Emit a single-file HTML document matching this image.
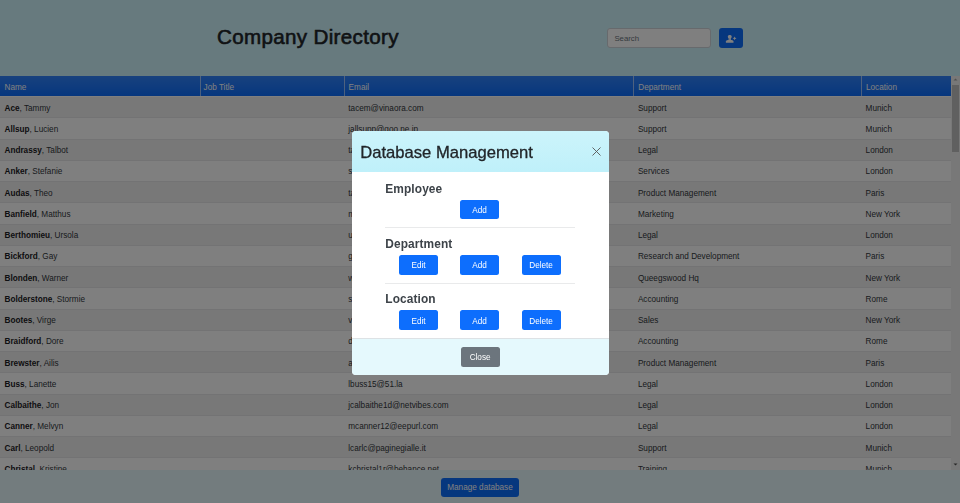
<!DOCTYPE html>
<html><head><meta charset="utf-8">
<style>
*{box-sizing:border-box;margin:0;padding:0}
html,body{width:960px;height:503px;overflow:hidden}
body{font-family:"Liberation Sans",sans-serif;background:#cff4fc;position:relative;color:#212529}
.title{position:absolute;left:217px;top:24px;font-size:20.6px;line-height:26px;color:#212529;white-space:nowrap;letter-spacing:0.33px;-webkit-text-stroke:0.6px #212529}
.search{position:absolute;left:607px;top:28px;width:103.5px;height:19.5px;background:#fff;border:1px solid #ced4da;border-radius:3px}
.search span{position:absolute;left:6.4px;top:0.7px;line-height:17px;font-size:7.8px;color:#6c757d}
.addbtn{position:absolute;left:719px;top:28px;width:24px;height:19.5px;background:#0d6efd;border-radius:3px}
.addbtn svg{position:absolute;left:0;top:0}
.tbl{position:absolute;left:0;top:76px;width:960px;height:394px;overflow:hidden;background:#fff}
.thead{position:absolute;left:0;top:0;width:951px;height:20.3px;background:#0d6efd linear-gradient(180deg,rgba(255,255,255,.15),rgba(255,255,255,0));color:#fff;font-size:8.2px;line-height:20.8px}
.thead .h{position:absolute;top:1.8px;height:20.8px;white-space:nowrap}
.vs{position:absolute;top:0;width:1px;height:20.8px;background:rgba(255,255,255,.55)}
.r{position:absolute;left:0;width:951px;height:21.2px;background:#fff;border-bottom:1px solid #e6e7e8;font-size:8.2px;line-height:21.2px;white-space:nowrap;color:#32373c}
.r b{color:#1c2024}
.r.odd{background:#f0f0f0}
.c{position:absolute;top:0.6px}
.c1{left:4.5px}.c3{left:348.3px}.c4{left:637.9px}.c5{left:865.6px}
.sb{position:absolute;left:951px;top:0;width:9px;height:394px;background:#f1f1f1}
.thumb{position:absolute;left:1px;top:9px;width:7px;height:67px;background:#c1c1c1}
.foot{position:absolute;left:0;top:470px;width:960px;height:33px;background:#e6f9fc}
.mbtn{position:absolute;left:441px;top:477.5px;width:78px;height:19.5px;background:#0d6efd;border-radius:3px;color:#fff;font-size:8.2px;line-height:19.5px;padding-top:0.8px;text-align:center;white-space:nowrap}
.overlay{position:absolute;left:0;top:0;width:960px;height:503px;background:rgba(0,0,0,.5)}
.modal{will-change:transform;position:absolute;left:352px;top:131px;width:257px;height:244px;background:#fff;border-radius:4px;overflow:hidden}
.mh{position:absolute;left:0;top:0;width:100%;height:41px;background:linear-gradient(#ccf4fb,#bff0fa)}
.mh .t{position:absolute;left:8.3px;top:2.2px;line-height:40.4px;font-size:16.6px;color:#212529;white-space:nowrap;-webkit-text-stroke:0.3px #212529}
.mh .x{position:absolute;left:239.6px;top:15.7px}
.sec{position:absolute;left:33.3px;font-size:11.9px;font-weight:bold;color:#3d4349;white-space:nowrap;letter-spacing:0.1px}
.btn{position:absolute;width:39px;height:19.4px;background:#0d6efd;border-radius:2.5px;color:#fff;font-size:8.2px;line-height:19.4px;text-align:center;padding-top:1.3px}
.hr{position:absolute;left:33px;width:190px;height:1px;background:#e9eaeb}
.mf{position:absolute;left:0;top:207.2px;width:100%;height:37px;background:#e5f9fd;border-top:1px solid #dde2e5}
.close{position:absolute;left:108.6px;top:8.3px;width:39px;height:19.7px;background:#6c757d;border-radius:2.5px;color:#fff;font-size:8.2px;line-height:19.7px;text-align:center;padding-top:0.9px}
</style></head><body>
<div class="title">Company Directory</div>
<div class="search"><span>Search</span></div>
<div class="addbtn"><svg width="24" height="20" viewBox="0 0 24 20"><rect x="8.8" y="6.9" width="3.9" height="3.3" rx="1.5" fill="#fff"/><rect x="9.5" y="9.5" width="2.5" height="2.6" fill="#fff" opacity="0.85"/><path d="M6.9 14.7V13.6Q6.9 11.9 8.8 11.9H12.6Q14.5 11.9 14.5 13.6V14.7Z" fill="#fff"/><path d="M15.6 8.4Q15.9 10 17.5 10.3Q15.9 10.6 15.6 12.2Q15.3 10.6 13.7 10.3Q15.3 10 15.6 8.4Z" fill="#fff"/></svg></div>
<div class="tbl">
<div class="thead">
<span class="h" style="left:4.5px">Name</span>
<span class="vs" style="left:199.5px"></span><span class="h" style="left:203.6px">Job Title</span>
<span class="vs" style="left:343.5px"></span><span class="h" style="left:348.6px">Email</span>
<span class="vs" style="left:633px"></span><span class="h" style="left:638.3px">Department</span>
<span class="vs" style="left:861px"></span><span class="h" style="left:866px">Location</span>
</div>
<div class="r odd" style="top:21.10px"><span class="c c1"><b>Ace</b>, Tammy</span><span class="c c3">tacem@vinaora.com</span><span class="c c4">Support</span><span class="c c5">Munich</span></div>
<div class="r" style="top:42.35px"><span class="c c1"><b>Allsup</b>, Lucien</span><span class="c c3">jallsupp@goo.ne.jp</span><span class="c c4">Support</span><span class="c c5">Munich</span></div>
<div class="r odd" style="top:63.60px"><span class="c c1"><b>Andrassy</b>, Talbot</span><span class="c c3">tandrassy2@cnn.com</span><span class="c c4">Legal</span><span class="c c5">London</span></div>
<div class="r" style="top:84.85px"><span class="c c1"><b>Anker</b>, Stefanie</span><span class="c c3">sanker3@vk.com</span><span class="c c4">Services</span><span class="c c5">London</span></div>
<div class="r odd" style="top:106.10px"><span class="c c1"><b>Audas</b>, Theo</span><span class="c c3">taudas4@mac.com</span><span class="c c4">Product Management</span><span class="c c5">Paris</span></div>
<div class="r" style="top:127.35px"><span class="c c1"><b>Banfield</b>, Matthus</span><span class="c c3">mbanfield5@wiley.com</span><span class="c c4">Marketing</span><span class="c c5">New York</span></div>
<div class="r odd" style="top:148.60px"><span class="c c1"><b>Berthomieu</b>, Ursola</span><span class="c c3">uberthomieu6@ovh.net</span><span class="c c4">Legal</span><span class="c c5">London</span></div>
<div class="r" style="top:169.85px"><span class="c c1"><b>Bickford</b>, Gay</span><span class="c c3">gbickford7@sina.com</span><span class="c c4">Research and Development</span><span class="c c5">Paris</span></div>
<div class="r odd" style="top:191.10px"><span class="c c1"><b>Blonden</b>, Warner</span><span class="c c3">wblonden8@ask.com</span><span class="c c4">Queegswood Hq</span><span class="c c5">New York</span></div>
<div class="r" style="top:212.35px"><span class="c c1"><b>Bolderstone</b>, Stormie</span><span class="c c3">sbolderstone9@me.com</span><span class="c c4">Accounting</span><span class="c c5">Rome</span></div>
<div class="r odd" style="top:233.60px"><span class="c c1"><b>Bootes</b>, Virge</span><span class="c c3">vbootesa@ibm.com</span><span class="c c4">Sales</span><span class="c c5">New York</span></div>
<div class="r" style="top:254.85px"><span class="c c1"><b>Braidford</b>, Dore</span><span class="c c3">dbraidfordb@w3.org</span><span class="c c4">Accounting</span><span class="c c5">Rome</span></div>
<div class="r odd" style="top:276.10px"><span class="c c1"><b>Brewster</b>, Ailis</span><span class="c c3">abrewsterc@bbc.co.uk</span><span class="c c4">Product Management</span><span class="c c5">Paris</span></div>
<div class="r" style="top:297.35px"><span class="c c1"><b>Buss</b>, Lanette</span><span class="c c3">lbuss15@51.la</span><span class="c c4">Legal</span><span class="c c5">London</span></div>
<div class="r odd" style="top:318.60px"><span class="c c1"><b>Calbaithe</b>, Jon</span><span class="c c3">jcalbaithe1d@netvibes.com</span><span class="c c4">Legal</span><span class="c c5">London</span></div>
<div class="r" style="top:339.85px"><span class="c c1"><b>Canner</b>, Melvyn</span><span class="c c3">mcanner12@eepurl.com</span><span class="c c4">Legal</span><span class="c c5">London</span></div>
<div class="r odd" style="top:361.10px"><span class="c c1"><b>Carl</b>, Leopold</span><span class="c c3">lcarlc@paginegialle.it</span><span class="c c4">Support</span><span class="c c5">Munich</span></div>
<div class="r" style="top:382.35px"><span class="c c1"><b>Christal</b>, Kristine</span><span class="c c3">kchristal1r@behance.net</span><span class="c c4">Training</span><span class="c c5">Munich</span></div>
<div class="sb"><div class="thumb"></div><svg style="position:absolute;left:0;top:0" width="9" height="394"><path d="M2.5 4.6L4.5 2.6L6.5 4.6Z" fill="#a3a3a3"/><path d="M2.5 387.6L4.5 389.6L6.5 387.6Z" fill="#505050"/></svg></div>
</div>
<div class="foot"></div>
<div class="mbtn">Manage database</div>
<div class="overlay"></div>
<div class="modal">
 <div class="mh"><span class="t">Database Management</span><svg class="x" width="9" height="9" viewBox="0 0 9 9"><path d="M0.5 0.5L8.5 8.5M8.5 0.5L0.5 8.5" stroke="#555" stroke-width="0.9"/></svg></div>
 <div class="sec" style="top:50.6px">Employee</div>
 <div class="btn" style="left:108px;top:68.8px">Add</div>
 <div class="hr" style="top:96.4px"></div>
 <div class="sec" style="top:105.6px">Department</div>
 <div class="btn" style="left:47px;top:124.2px">Edit</div>
 <div class="btn" style="left:108px;top:124.2px">Add</div>
 <div class="btn" style="left:169.6px;top:124.2px">Delete</div>
 <div class="hr" style="top:151.5px"></div>
 <div class="sec" style="top:161.1px">Location</div>
 <div class="btn" style="left:47px;top:179.4px">Edit</div>
 <div class="btn" style="left:108px;top:179.4px">Add</div>
 <div class="btn" style="left:169.6px;top:179.4px">Delete</div>
 <div class="mf"><div class="close">Close</div></div>
</div>
</body></html>
